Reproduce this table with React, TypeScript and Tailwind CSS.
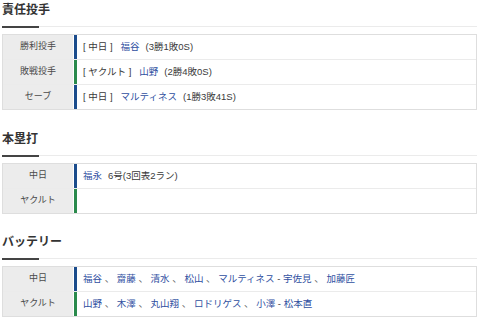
import React from 'react';

type Team = 'dragons' | 'swallows';

const barColor: Record<Team, string> = {
  dragons: 'bg-[#1b4c8c]',
  swallows: 'bg-[#2a8a4c]',
};

const Link: React.FC<{ children: React.ReactNode; className?: string }> = ({ children, className = '' }) => (
  <a className={`text-[#2f4f9f] ${className}`}>{children}</a>
);

const SectionTitle: React.FC<{ title: string }> = ({ title }) => (
  <div>
    <h2 className="text-[12px] leading-[20px] font-bold text-[#333]">{title}</h2>
    <div className="mt-[6px] h-px bg-[#ebebeb]">
      <div className="h-[2px] w-[37px] bg-[#444]" />
    </div>
  </div>
);

type Row = { label: string; team: Team; content: React.ReactNode };

const Table: React.FC<{ rows: Row[] }> = ({ rows }) => (
  <div className="mt-[7px] border border-[#dedede]">
    {rows.map((row, i) => (
      <div
        key={i}
        className={`flex h-[24px] ${i < rows.length - 1 ? 'box-content border-b border-[#ebebeb]' : ''}`}
      >
        <div className="w-[70px] flex items-center justify-center bg-[#ececec] text-[9px] text-[#4a4a4a]">
          {row.label}
        </div>
        <div className="w-px bg-white" />
        <div className={`w-[3px] ${barColor[row.team]}`} />
        <div className="flex-1 flex items-center pl-[6px] text-[9.5px] text-[#3a3a3a] whitespace-nowrap">
          {row.content}
        </div>
      </div>
    ))}
  </div>
);

const Pitcher: React.FC<{ team: string; name: string; record: string }> = ({ team, name, record }) => (
  <>
    <span>[ {team} ]</span>
    <Link className="ml-[8px]">{name}</Link>
    <span className="ml-[6px]">{record}</span>
  </>
);

const NameList: React.FC<{ pitchers: string[]; catchers: string[] }> = ({ pitchers, catchers }) => (
  <span className="whitespace-pre">
    {pitchers.map((p, i) => (
      <React.Fragment key={p}>
        {i > 0 && <span className="text-[#666]"> 、 </span>}
        <Link>{p}</Link>
      </React.Fragment>
    ))}
    <span> - </span>
    {catchers.map((c, i) => (
      <React.Fragment key={c}>
        {i > 0 && <span className="text-[#666]"> 、 </span>}
        <Link>{c}</Link>
      </React.Fragment>
    ))}
  </span>
);

const App: React.FC = () => {
  return (
    <div
      className="w-[480px] h-[319px] overflow-hidden bg-white pl-[2px] pr-[3px]"
      style={{ fontFamily: '"Liberation Sans", "Noto Sans CJK JP", sans-serif' }}
    >
      <section>
        <SectionTitle title="責任投手" />
        <Table
          rows={[
            { label: '勝利投手', team: 'dragons', content: <Pitcher team="中日" name="福谷" record="(3勝1敗0S)" /> },
            { label: '敗戦投手', team: 'swallows', content: <Pitcher team="ヤクルト" name="山野" record="(2勝4敗0S)" /> },
            { label: 'セーブ', team: 'dragons', content: <Pitcher team="中日" name="マルティネス" record="(1勝3敗41S)" /> },
          ]}
        />
      </section>

      <section className="mt-[19px]">
        <SectionTitle title="本塁打" />
        <Table
          rows={[
            {
              label: '中日',
              team: 'dragons',
              content: (
                <>
                  <Link>福永</Link>
                  <span className="ml-[6px]">6号(3回表2ラン)</span>
                </>
              ),
            },
            { label: 'ヤクルト', team: 'swallows', content: null },
          ]}
        />
      </section>

      <section className="mt-[18px]">
        <SectionTitle title="バッテリー" />
        <Table
          rows={[
            {
              label: '中日',
              team: 'dragons',
              content: <NameList pitchers={['福谷', '齋藤', '清水', '松山', 'マルティネス']} catchers={['宇佐見', '加藤匠']} />,
            },
            {
              label: 'ヤクルト',
              team: 'swallows',
              content: <NameList pitchers={['山野', '木澤', '丸山翔', 'ロドリゲス', '小澤']} catchers={['松本直']} />,
            },
          ]}
        />
      </section>
    </div>
  );
};

export default App;
